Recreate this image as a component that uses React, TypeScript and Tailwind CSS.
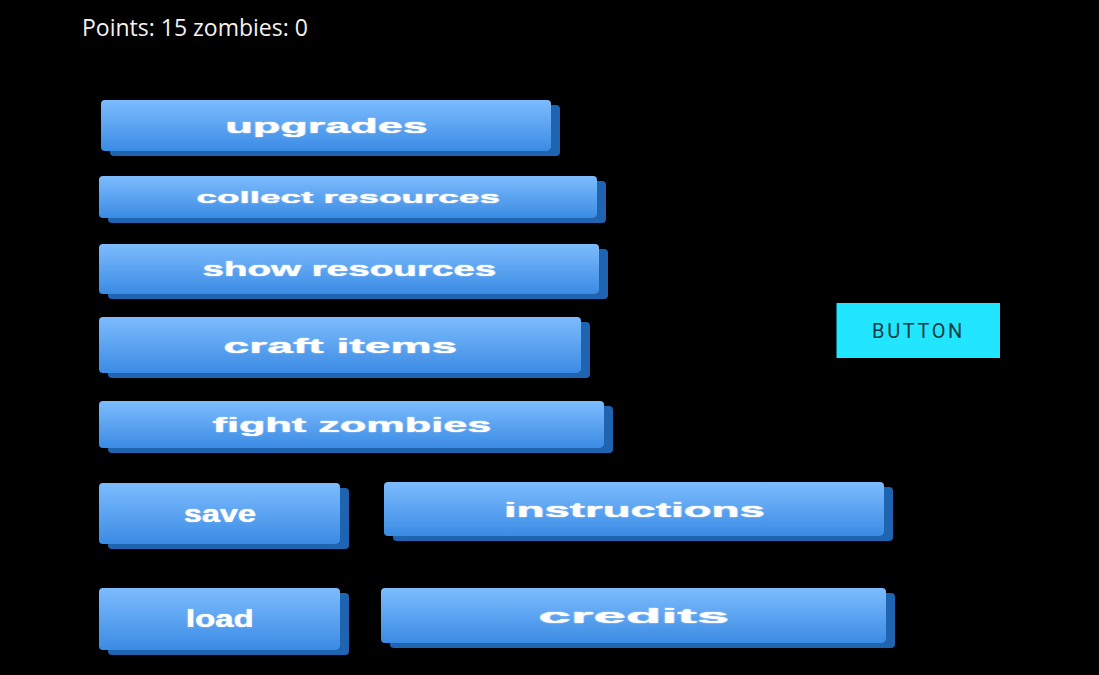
type BlueProps = {
  label: string;
  box: string;
  text: string;
};

const BlueButton = ({ label, box, text }: BlueProps) => {
  return (
    <button
      className={`flex shrink-0 items-center justify-center rounded-[4px] bg-gradient-to-b from-[#7cbcfd] to-[#3a8be4] shadow-[9px_5px_0_#1e64b1] ${box}`}
    >
      <span
        className={`inline-block whitespace-nowrap font-['Liberation_Sans',Arial,sans-serif] font-bold leading-none text-white [text-shadow:0_0_1px_rgba(255,255,255,0.8),0.5px_0_0_rgba(255,255,255,0.7)] ${text}`}
      >
        {label}
      </span>
    </button>
  );
};

export default function App() {
  return (
    <div className="flex h-[675px] w-full flex-col overflow-hidden bg-black">
      <p className="mt-[12px] h-[30px] pl-[82px] font-['Open_Sans',sans-serif] text-[23px] leading-[30px] text-[#f2f2f2]">
        Points: 15 zombies: 0
      </p>

      <div className="flex">
        <div className="flex w-[616px] shrink-0 flex-col items-start pl-[99px]">
          <BlueButton
            label="upgrades"
            box="ml-[2px] mt-[58px] h-[51px] w-[450px]"
            text="text-[21px] scale-x-[2.14]"
          />
          <BlueButton
            label="collect resources"
            box="mt-[25px] h-[42px] w-[498px]"
            text="text-[17px] scale-x-[2.17]"
          />
          <BlueButton
            label="show resources"
            box="mt-[26px] h-[50px] w-[500px]"
            text="text-[20px] scale-x-[1.93]"
          />
          <BlueButton
            label="craft items"
            box="mt-[23px] h-[56px] w-[482px]"
            text="text-[21px] scale-x-[2.2]"
          />
          <BlueButton
            label="fight zombies"
            box="mt-[28px] h-[47px] w-[505px]"
            text="text-[21px] scale-x-[2.06]"
          />
        </div>

        <button className="ml-[220px] mt-[261px] flex h-[55px] w-[164px] shrink-0 items-center justify-center border-l border-[#0b7483] bg-[#22e6ff] font-['Roboto',sans-serif] text-[20px] tracking-[0.13em] text-[#163a40]">
          BUTTON
        </button>
      </div>

      <div className="mt-[34px] flex items-start pl-[99px]">
        <BlueButton
          label="save"
          box="mt-[1px] h-[61px] w-[241px]"
          text="text-[24px] scale-x-[1.35]"
        />
        <BlueButton
          label="instructions"
          box="ml-[44px] h-[54px] w-[500px]"
          text="text-[21px] scale-x-[2.17]"
        />
      </div>

      <div className="mt-[44px] flex items-start pl-[99px]">
        <BlueButton
          label="load"
          box="h-[62px] w-[241px]"
          text="text-[24px] scale-x-[1.37]"
        />
        <BlueButton
          label="credits"
          box="ml-[41px] h-[55px] w-[505px]"
          text="text-[21px] scale-x-[2.77]"
        />
      </div>
    </div>
  );
}
